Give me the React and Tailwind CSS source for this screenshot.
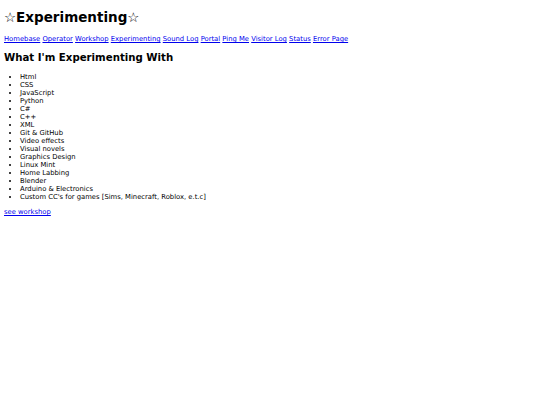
const links = ["Homebase", "Operator", "Workshop", "Experimenting", "Sound Log", "Portal", "Ping Me", "Visitor Log", "Status", "Error Page"]

const items = [
    "Html",
    "CSS",
    "JavaScript",
    "Python",
    "C#",
    "C++",
    "XML",
    "Git & GitHub",
    "Video effects",
    "Visual novels",
    "Graphics Design",
    "Linux Mint",
    "Home Labbing",
    "Blender",
    "Arduino & Electronics",
    "Custom CC's for games [Sims, Minecraft, Roblox, e.t.c]",
]

export default function App() {
    return (
        <div className="min-h-[405px] bg-white px-1 pt-[9px] font-['DejaVu_Sans',Verdana,sans-serif] text-[6.8px] leading-[8px] text-black">
            <h1 className="text-[13.5px] font-bold leading-[16px]">☆Experimenting☆</h1>

            {/* nav */}
            <p className="mt-[10px]">
                {links.map((l, idx) => (
                    <span key={l}>
                        <a href="#" className="text-[#0000ee] underline">{l}</a>
                        {idx < links.length - 1 ? " " : ""}
                    </span>
                ))}
            </p>

            <h2 className="mt-[9px] text-[10.2px] font-bold leading-[12px]">What I'm Experimenting With</h2>

            <ul className="mt-[9px] list-disc pl-4">
                {items.map((i) => (
                    <li key={i}>{i}</li>
                ))}
            </ul>

            <p className="mt-[7px]">
                <a href="#" className="text-[#0000ee] underline">see workshop</a>
            </p>
        </div>
    )
}
